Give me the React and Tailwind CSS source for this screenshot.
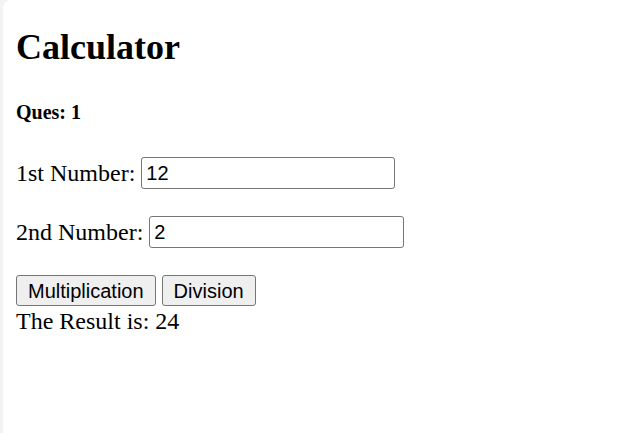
import { useState } from "react";

export default function App() {
  const [first, setFirst] = useState("12");
  const [second, setSecond] = useState("2");
  const [result, setResult] = useState(24);

  const multiply = () => setResult(Number(first) * Number(second));
  const divide = () => setResult(Number(first) / Number(second));

  return (
    <div className="min-h-screen flex bg-[#f3f3f3] pl-[3px]">
      <div className="flex-1 bg-white rounded-tl-[8px] pl-[13px] pt-[27px] text-black font-['Liberation_Serif',serif]">
        <h1 className="text-[36px] leading-[40px] font-bold">Calculator</h1>
        <h4 className="mt-[33px] text-[20px] leading-[24px] font-bold">Ques: 1</h4>

        <div className="mt-[33px] flex items-center gap-[6px] h-[32px]">
          <label className="text-[24px] leading-[28px]">1st Number:</label>
          <input
            type="text"
            value={first}
            onChange={(e) => setFirst(e.target.value)}
            className="w-[254px] h-[32px] border border-[#767676] rounded-[3px] pl-[4px] text-[20px] font-['Liberation_Sans',Arial,sans-serif] outline-none"
          />
        </div>

        <div className="mt-[27px] flex items-center gap-[6px] h-[32px]">
          <label className="text-[24px] leading-[28px]">2nd Number:</label>
          <input
            type="text"
            value={second}
            onChange={(e) => setSecond(e.target.value)}
            className="w-[255px] h-[32px] border border-[#767676] rounded-[3px] pl-[4px] text-[20px] font-['Liberation_Sans',Arial,sans-serif] outline-none"
          />
        </div>

        <div className="mt-[27px] flex gap-[6px]">
          <button
            onClick={multiply}
            className="h-[31px] px-[11px] bg-[#efefef] border border-[#767676] rounded-[3px] text-[20px] leading-[24px] font-['Liberation_Sans',Arial,sans-serif]"
          >
            Multiplication
          </button>
          <button
            onClick={divide}
            className="h-[31px] px-[11px] bg-[#efefef] border border-[#767676] rounded-[3px] text-[20px] leading-[24px] font-['Liberation_Sans',Arial,sans-serif]"
          >
            Division
          </button>
        </div>

        <p className="text-[24px] leading-[30px]">The Result is: {result}</p>
      </div>
    </div>
  );
}
